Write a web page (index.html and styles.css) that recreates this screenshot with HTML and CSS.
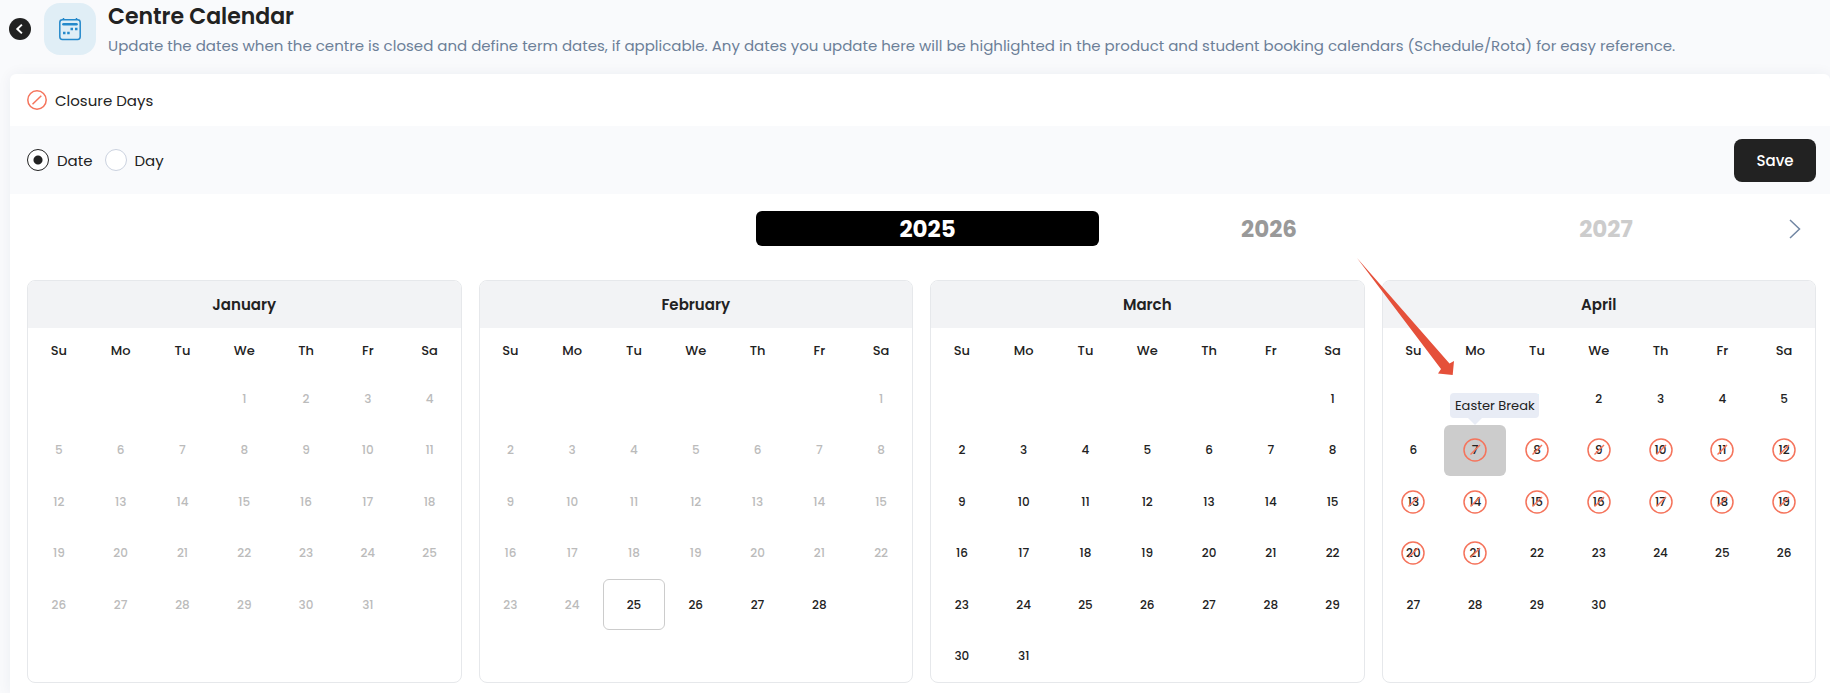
FILE: index.html
```html
<!DOCTYPE html>
<html lang="en">
<head>
<meta charset="utf-8">
<meta name="viewport" content="width=device-width, initial-scale=1">
<title>Centre Calendar</title>
<link rel="stylesheet" href="styles.css">
</head>
<body>
<header class="page-header">
  <button class="back" type="button" aria-label="Back">
    <svg viewBox="0 0 22 22" width="22" height="22"><circle cx="11" cy="11" r="11" fill="#222"/><path d="M12.9 6.6 8.3 11l4.6 4.4" fill="none" stroke="#fff" stroke-width="2"/></svg>
  </button>
  <div class="header-icon">
    <svg viewBox="0 0 24 24" width="24" height="24" fill="none" stroke="#2589cb">
      <rect x="1.8" y="2.8" width="20.4" height="19.6" rx="2.6" stroke-width="1.5"/>
      <path d="M5.5 1v2M18.500 1v2" stroke-width="1.5"/>
      <path d="M5.500 7.200h13" stroke-width="2.600" stroke-linecap="round"/>
      <path d="M12.500 12h2.500M17 12h2.500M5 16h2.500M9.200 16h2.500" stroke-width="2.500"/>
    </svg>
  </div>
  <div class="header-text">
    <h1 class="title">Centre Calendar</h1>
    <p class="subtitle">Update the dates when the centre is closed and define term dates, if applicable. Any dates you update here will be highlighted in the product and student booking calendars (Schedule/Rota) for easy reference.</p>
  </div>
</header>
<main class="panel">
  <div class="legend">
    <svg class="ban" viewBox="0 0 20 20" width="20" height="20"><circle cx="10" cy="10" r="9.200"/><path d="M5.500 14.300 14.300 5.800"/></svg>
    <span>Closure Days</span>
  </div>
  <form class="toolbar">
    <label class="choice"><input type="radio" name="mode" checked>Date</label>
    <label class="choice"><input type="radio" name="mode">Day</label>
    <button class="save" type="button">Save</button>
  </form>
  <nav class="years" aria-label="Year">
    <button class="year year-current" type="button">2025</button>
    <button class="year year-next" type="button">2026</button>
    <button class="year year-later" type="button">2027</button>
    <button class="year-arrow" type="button" aria-label="Next years">
      <svg viewBox="0 0 12 20" width="12" height="20"><path d="M1 1l9.500 9L1 19" fill="none" stroke="#7186a3" stroke-width="1.500"/></svg>
    </button>
  </nav>
  <div class="months" id="months"></div>
</main>
<script src="script.js"></script>
</body>
</html>
```
FILE: styles.css
```css
* { box-sizing: border-box; }

body {
  margin: 0;
  background: #f9fafc;
  color: #222;
  font-family: Poppins, Inter, sans-serif;
  font-size: 15px;
}

button {
  padding: 0;
  border: 0;
  background: none;
  color: inherit;
  font: inherit;
}

svg { display: block; }

.page-header {
  display: flex;
  align-items: flex-start;
  padding: 3px 10px 16px 9px;
}

.back {
  width: 22px;
  height: 52px;
}

.header-icon {
  display: grid;
  place-items: center;
  flex: none;
  width: 52px;
  height: 52px;
  margin: 0 12px 0 13px;
  border-radius: 16px;
  background: #e0eef6;
}

.title {
  margin: 0;
  font-size: 22px;
  font-weight: 600;
  line-height: 27px;
}

.subtitle {
  margin: 4px 0 0;
  color: #6c7f98;
  font-size: 15px;
  line-height: 24px;
}

.panel {
  margin-left: 10px;
  padding-bottom: 10px;
  border-radius: 6px 6px 0 0;
  background: #fff;
  box-shadow: 0 0 14px rgba(30, 50, 80, 0.06);
}

.legend {
  display: flex;
  align-items: center;
  gap: 8px;
  height: 52px;
  padding: 0 17px;
}

.ban {
  fill: none;
  stroke: #f5745c;
  stroke-width: 1.5;
}

.toolbar {
  display: flex;
  align-items: center;
  gap: 12px;
  height: 68px;
  padding: 0 14px 0 17px;
  background: #f9fafc;
}

.choice {
  display: flex;
  align-items: center;
  gap: 8px;
}

.choice input {
  appearance: none;
  width: 22px;
  height: 22px;
  margin: 0;
  border: 1px solid #cbd2df;
  border-radius: 50%;
  background: #fff;
}

.choice input:checked {
  border-color: #222;
  background: radial-gradient(circle, #222 4px, #fff 5px);
}

.save {
  width: 82px;
  height: 43px;
  margin-left: auto;
  border-radius: 8px;
  background: #222;
  color: #fff;
  font-weight: 500;
}

.years {
  display: grid;
  grid-template-columns: 729fr 343fr 340fr 334fr 43fr;
  align-items: center;
  padding: 17px 14px 34px 17px;
}

.year {
  height: 35px;
  border-radius: 6px;
  font-size: 23px;
  font-weight: 700;
}

.year-current {
  grid-column: 2;
  background: #000;
  color: #fff;
}

.year-next { color: #999; }
.year-later { color: #ccc; }
.year-arrow { justify-self: center; }

.months {
  display: grid;
  grid-template-columns: repeat(4, 1fr);
  gap: 17px;
  padding: 0 14px 0 17px;
}

.month {
  position: relative;
  border: 1px solid #e6e8eb;
  border-radius: 8px;
}

.month-name {
  margin: 0;
  border-radius: 7px 7px 0 0;
  background: #f2f3f5;
  font-size: 15px;
  font-weight: 600;
  line-height: 47px;
  text-align: center;
}

.days {
  width: 100%;
  height: 354px;
  border-collapse: collapse;
  table-layout: fixed;
}

.days th {
  height: 45px;
  padding: 0;
  font-size: 13px;
  font-weight: 500;
}

.days td {
  height: 51px;
  padding: 0;
}

.day {
  display: grid;
  place-items: center;
  position: relative;
  width: 100%;
  height: 51px;
  border-radius: 6px;
  font-size: 12px;
  font-weight: 500;
}

.day-past { color: #bbb; }
.day-today { border: 1px solid #ccc; }
.day-hover { background: #ccc; }

.day .ban {
  position: absolute;
  inset: 0;
  margin: auto;
}

.tooltip {
  position: absolute;
  bottom: 58px;
  left: 6px;
  z-index: 1;
  min-width: 89px;
  border-radius: 4px;
  background: #e8ecf5;
  font-size: 13px;
  font-weight: 400;
  line-height: 25px;
  white-space: nowrap;
}

.tooltip::after {
  content: "";
  position: absolute;
  top: 100%;
  left: 18px;
  border: 7px solid transparent;
  border-bottom: 0;
  border-top-color: #e8ecf5;
}

.pointer {
  position: absolute;
  top: -23px;
  left: -26px;
  z-index: 2;
}
```
FILE: script.js
```js
const weekdays = ["Su", "Mo", "Tu", "We", "Th", "Fr", "Sa"];
const months = [
  { name: "January", start: 3, days: 31, past: 31 },
  { name: "February", start: 6, days: 28, past: 24, today: 25 },
  { name: "March", start: 6, days: 31, past: 0 },
  { name: "April", start: 2, days: 30, past: 0, closed: [7, 21], note: { day: 7, text: "Easter Break" } }
];

const ban = '<svg class="ban" viewBox="0 0 24 24" width="24" height="24"><circle cx="12" cy="12" r="11"/><path d="M7.500 16.500 17 7"/></svg>';
const pointer = '<svg class="pointer" viewBox="0 0 98 118" width="98" height="118"><path fill="#e5503a" d="M0 0 92.500 105.500 97 103 95.700 117 81 115.500 84 111Z"/></svg>';

function dayButton(month, day) {
  if (day < 1 || day > month.days) return "";
  const classes = ["day"];
  if (day <= month.past) classes.push("day-past");
  if (day === month.today) classes.push("day-today");
  let extra = "";
  if (month.closed && day >= month.closed[0] && day <= month.closed[1]) extra += ban;
  if (month.note && day === month.note.day) {
    classes.push("day-hover");
    extra += `<span class="tooltip" role="tooltip">${month.note.text}</span>`;
  }
  return `<button type="button" class="${classes.join(" ")}">${day}${extra}</button>`;
}

function monthCard(month) {
  let rows = "";
  for (let week = 0; week < 6; week++) {
    const cells = weekdays.map((_, i) => `<td>${dayButton(month, week * 7 + i - month.start + 1)}</td>`);
    rows += `<tr>${cells.join("")}</tr>`;
  }
  const head = weekdays.map(d => `<th scope="col">${d}</th>`).join("");
  return `<section class="month"><h2 class="month-name">${month.name}</h2>
    <table class="days" aria-label="${month.name}"><thead><tr>${head}</tr></thead><tbody>${rows}</tbody></table>
    ${month.note ? pointer : ""}</section>`;
}

document.getElementById("months").innerHTML = months.map(monthCard).join("");
```
